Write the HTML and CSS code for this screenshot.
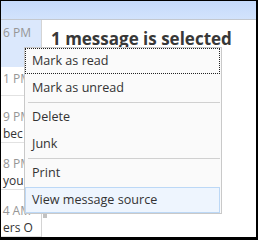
FILE: index.html
```html
<!DOCTYPE html>
<html lang="en">
<head>
    <meta charset="UTF-8">
    <title>Message selected</title>
    <link rel="stylesheet" href="styles.css">
</head>
<body>
    <div class="window">
        <div class="topbar"></div>
        <div class="main">
            <div class="list">
                <div class="row selected">
                    <div class="time">6 PM</div>
                </div>
                <div class="row short">
                    <div class="time">1 PM</div>
                </div>
                <div class="row">
                    <div class="time">9 PM</div>
                    <div class="preview">bec</div>
                </div>
                <div class="row">
                    <div class="time">8 PM</div>
                    <div class="preview">you</div>
                </div>
                <div class="row">
                    <div class="time">4 AM</div>
                    <div class="preview">ers O</div>
                </div>
            </div>
            <div class="reading">
                <h1>1 message is selected</h1>
                <div class="thumb"></div>
            </div>
        </div>

        <ul class="menu">
            <li class="item focused">Mark as read</li>
            <li class="item">Mark as unread</li>
            <li class="sep"></li>
            <li class="item">Delete</li>
            <li class="item">Junk</li>
            <li class="sep"></li>
            <li class="item">Print</li>
            <li class="item hover">View message source</li>
        </ul>
    </div>
</body>
</html>
```

FILE: styles.css
```css
body {
    margin: 0;
    font-family: "Open Sans", "Noto Sans", sans-serif;
}
.window {
    position: relative;
    width: 258px;
    height: 240px;
    box-sizing: border-box;
    border: 1px solid #000;
    border-right-width: 2px;
    border-bottom-width: 3px;
    background-color: #fff;
    overflow: hidden;
}
.topbar {
    height: 18px;
    background: linear-gradient(#c5dafb, #d2e3fc);
    border-bottom: 1px solid #c4c8ce;
}
.main {
    display: flex;
    height: 217px;
}
.list {
    width: 40px;
    border-right: 1px solid #d4d4d4;
    overflow: hidden;
}
.row {
    height: 47px;
    border-bottom: 1px solid #e2e2e2;
    box-sizing: border-box;
    padding-top: 12px;
    font-size: 12px;
    line-height: 17px;
}
.row.selected {
    height: 47px;
    padding-top: 4px;
    background-color: #dbe8fc;
    border-bottom: none;
}
.row.short {
    height: 29px;
    padding-top: 3px;
}
.time {
    color: #969696;
    text-align: right;
    white-space: nowrap;
    padding-right: 10px;
}
.preview {
    color: #333;
    white-space: nowrap;
    padding-left: 2px;
}
.reading {
    position: relative;
    flex: 1;
    padding: 7px 0 0 9px;
}
h1 {
    margin: 0;
    font-size: 17px;
    line-height: 23px;
    font-weight: bold;
    color: #383838;
    white-space: nowrap;
}
.thumb {
    position: absolute;
    left: 1px;
    top: 194px;
    width: 4px;
    height: 4px;
    background-color: #c2c2c2;
}
.menu {
    position: absolute;
    left: 23px;
    top: 46px;
    width: 196px;
    margin: 0;
    padding: 0;
    list-style: none;
    background-color: #fafafa;
    border: 1px solid #c9c9c9;
    font-size: 12.6px;
    color: #333;
}
.item {
    height: 24px;
    line-height: 24px;
    padding-left: 6px;
    border: 1px solid transparent;
    margin: 0 1px 1px 0;
}
.item.focused {
    border: 1px dotted #222;
}
.item.hover {
    background-color: #eef5fe;
    border-color: #bcd8f6;
    margin-bottom: 0;
}
.sep {
    height: 1px;
    margin: 0 1px 1px 3px;
    background-color: #d0d0d0;
}
```
